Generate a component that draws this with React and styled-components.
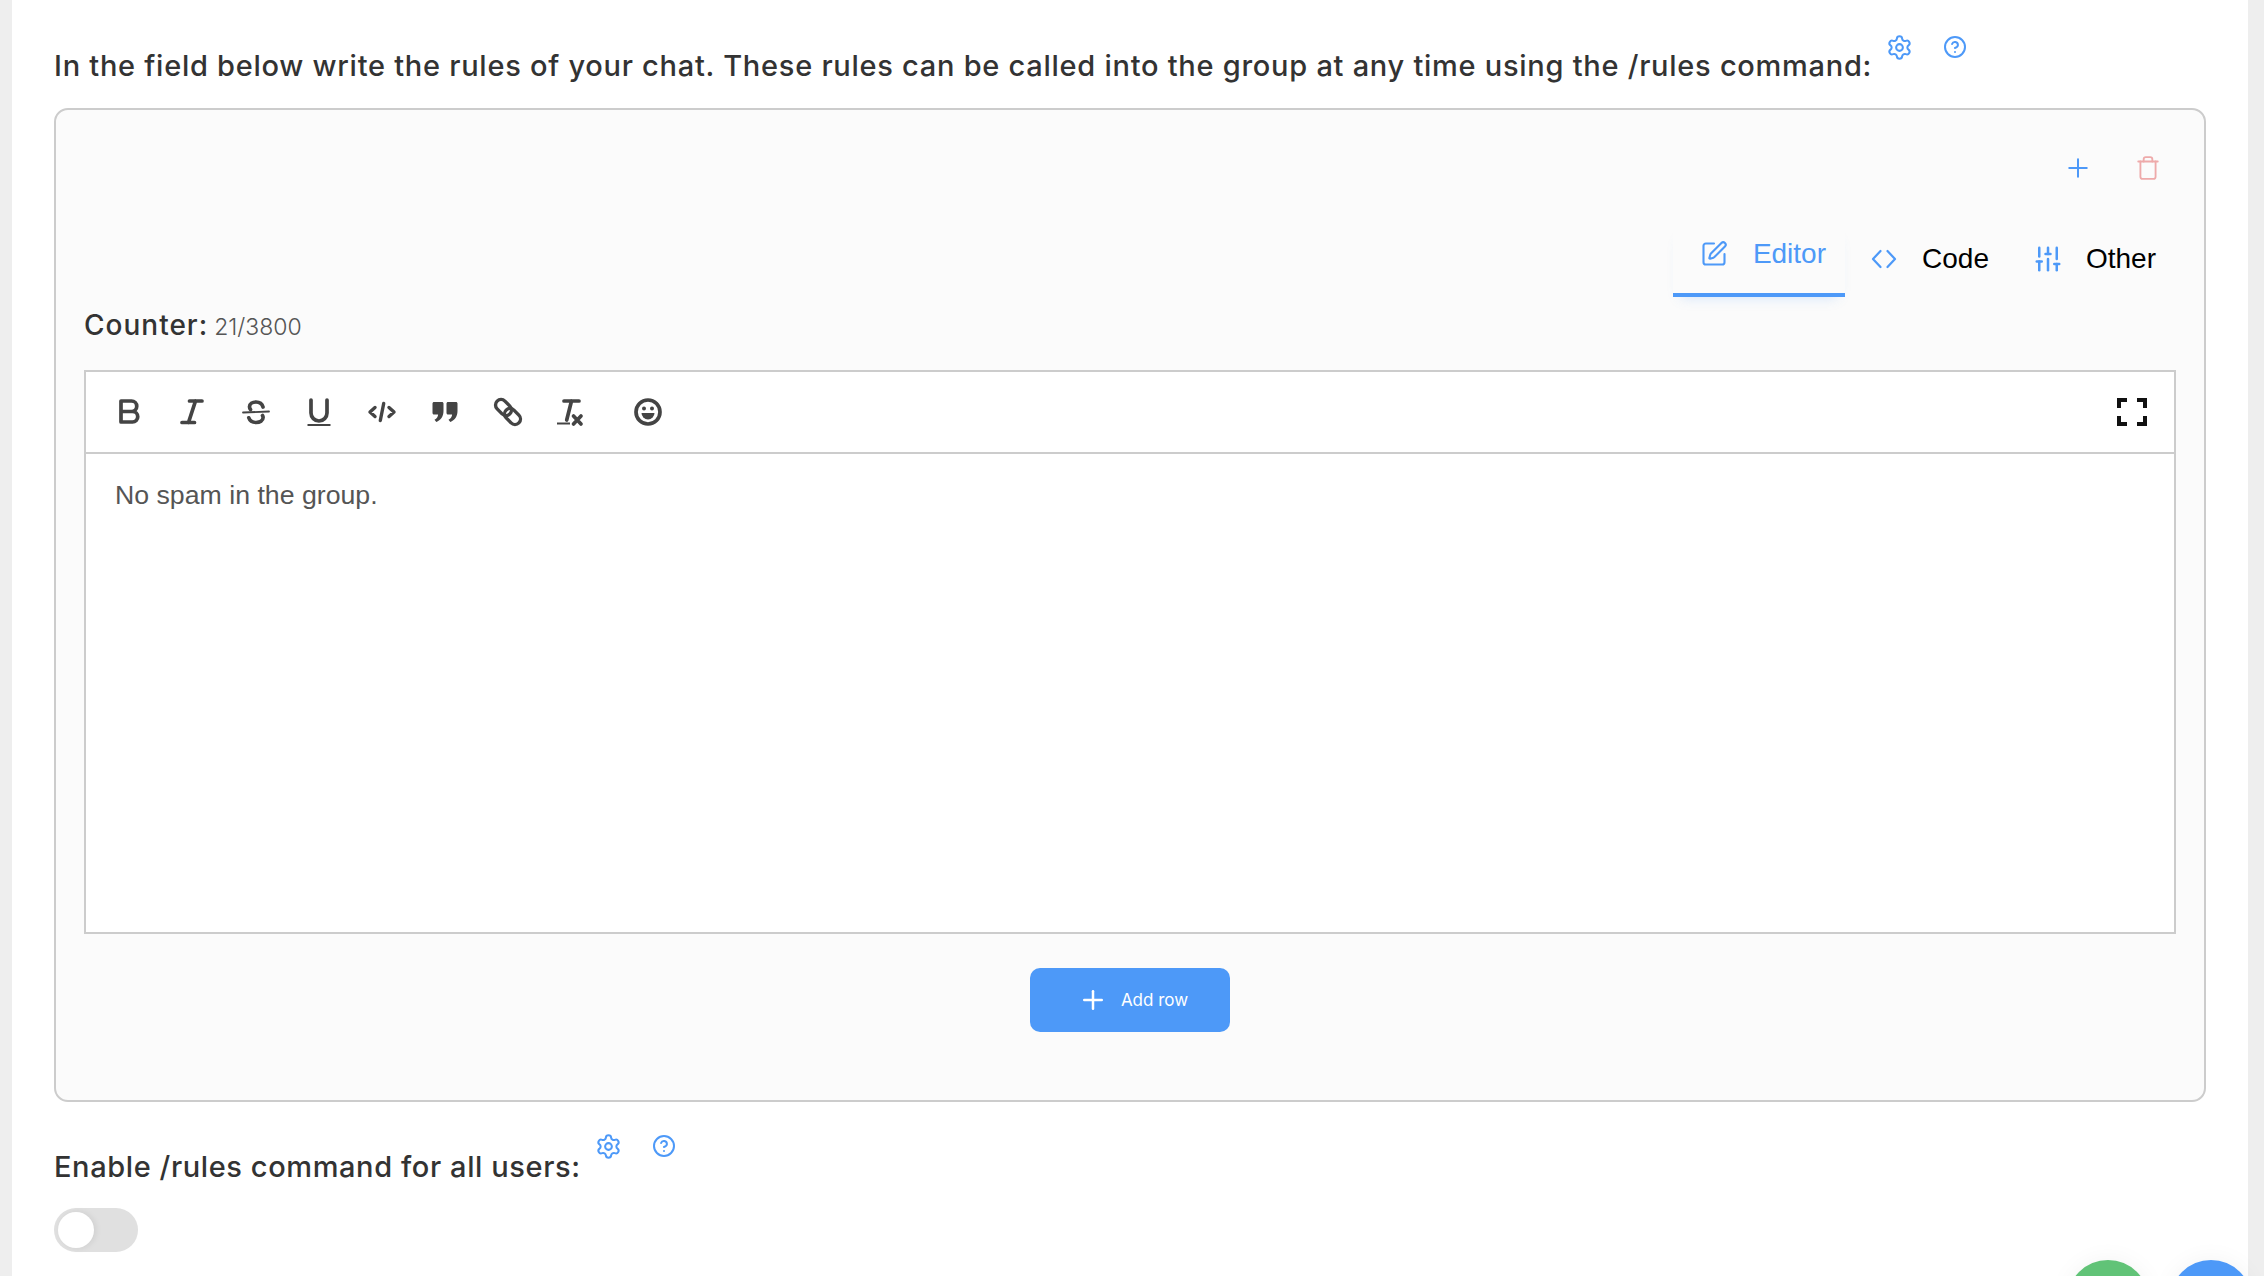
import React from "react";
import styled, { createGlobalStyle } from "styled-components";
import { Settings, CircleHelp, Plus, Trash, SquarePen, SlidersVertical } from "lucide-react";

const GlobalStyle = createGlobalStyle`
  html, body {
    margin: 0;
    padding: 0;
    background: #eeeeee;
  }
  * {
    box-sizing: border-box;
  }
`;

const BLUE = "#4d99f8";

const BoldIcon = () => (
  <ToolSvg viewBox="0 0 28 28">
    <path d="M5 3h10.500a5 5 0 0 1 0 10.500H5zM5 13.500h11.500a5.200 5.200 0 0 1 0 10.500H5z" />
  </ToolSvg>
);

const ItalicIcon = () => (
  <ToolSvg viewBox="0 0 28 28">
    <path d="M10.500 3h12.500M3 24.500h12.500M16.500 3l-7 21.500" />
  </ToolSvg>
);

const StrikeIcon = () => (
  <ToolSvg viewBox="0 0 28 28">
    <path d="M21 9c-1-3.600-3.800-5-7-5-3.600 0-6.500 1.800-6.500 4.800 0 1.200.4 2 1 2.700M20.500 17.500c.4.700.6 1.400.6 2.100 0 3-3.200 4.900-7 4.900-3.600 0-6.300-1.600-7.300-4.700" />
    <path d="M1 14.500l26-1" strokeWidth="1.800" />
  </ToolSvg>
);

const UnderlineIcon = () => (
  <ToolSvg viewBox="0 0 28 28">
    <path d="M6 2v13a8 8 0 0 0 16 0V2" />
    <path d="M2.500 27h23" strokeWidth="2" strokeLinecap="butt" />
  </ToolSvg>
);

const CodeIcon = () => (
  <ToolSvg viewBox="0 0 28 28">
    <path d="M7 9.500l-5 4.500 5 4.500M21 9.500l5 4.500-5 4.500M15.700 5.500l-3.400 17" strokeWidth="3.400" />
  </ToolSvg>
);

const QuoteIcon = () => (
  <ToolSvg viewBox="0 0 28 28">
    <path
      stroke="none"
      fill="#444"
      d="M3 4h8c.8 0 1.500.7 1.500 1.500V13c0 5.500-2.800 9.200-7.200 11L3.500 21.800c2.400-1.300 3.500-3 3.600-5.300H3c-.8 0-1.500-.7-1.500-1.500V5.500C1.500 4.700 2.200 4 3 4zM17 4h8c.8 0 1.500.7 1.500 1.500V13c0 5.500-2.800 9.200-7.200 11l-1.800-2.200c2.400-1.300 3.500-3 3.600-5.300H17c-.8 0-1.500-.7-1.500-1.500V5.500C15.500 4.700 16.200 4 17 4z"
    />
  </ToolSvg>
);

const LinkIcon = () => (
  <ToolSvg viewBox="0 0 28 28">
    <rect x="0.500" y="4" width="18" height="11" rx="5.500" transform="rotate(45 9.500 9.500)" strokeWidth="3.400" />
    <rect x="9.500" y="13" width="18" height="11" rx="5.500" transform="rotate(45 18.500 18.500)" strokeWidth="3.400" />
  </ToolSvg>
);

const ClearIcon = () => (
  <ToolSvg viewBox="0 0 28 28">
    <path d="M7 3h15M14.500 3l-4.800 19" />
    <path d="M0 25.500h13" strokeWidth="2" strokeLinecap="butt" />
    <path d="M16.500 18l7.500 8M24 18l-7.500 8" />
  </ToolSvg>
);

const EmojiIcon = () => (
  <ToolSvg viewBox="0 0 28 28">
    <circle cx="14" cy="14" r="12" />
    <circle cx="10" cy="10.500" r="2" fill="#444" stroke="none" />
    <circle cx="18" cy="10.500" r="2" fill="#444" stroke="none" />
    <path d="M7.500 15h13a6.500 6.500 0 0 1-13 0z" fill="#444" stroke="none" />
  </ToolSvg>
);

const FullscreenIcon = () => (
  <svg width="30" height="30" viewBox="0 0 30 30" fill="none" stroke="#111" strokeWidth="4">
    <path d="M2 11V3h8M20 3h8v8M28 19v8h-8M10 27H2v-8" />
  </svg>
);

const CodeTabIcon = () => (
  <svg width="26" height="22" viewBox="0 0 26 22" fill="none" stroke={BLUE} strokeWidth="2.200" strokeLinecap="round" strokeLinejoin="round">
    <path d="M9.500 3L2 11l7.500 8M16.500 3L24 11l-7.500 8" />
  </svg>
);

const HintIcons = () => (
  <Hints>
    <Settings size={27} strokeWidth={1.8} />
    <CircleHelp size={24} strokeWidth={2} />
  </Hints>
);

const App = () => {
  return (
    <Page>
      <GlobalStyle />
      <Panel>
        <TitleRow>
          <Title>In the field below write the rules of your chat. These rules can be called into the group at any time using the /rules command:</Title>
          <HintIcons />
        </TitleRow>

        <Card>
          <Actions>
            <Plus size={30} strokeWidth={1.6} color={BLUE} />
            <Trash size={26} strokeWidth={1.7} color="#eeaaaa" />
          </Actions>

          <Tabs>
            <Tab $active>
              <SquarePen size={28} strokeWidth={1.8} color={BLUE} />
              Editor
            </Tab>
            <Tab>
              <CodeTabIcon />
              Code
            </Tab>
            <Tab>
              <SlidersVertical size={30} strokeWidth={2} color={BLUE} />
              Other
            </Tab>
          </Tabs>

          <Counter>
            Counter:<CounterValue>21/3800</CounterValue>
          </Counter>

          <Editor>
            <Toolbar>
              <ToolButton><BoldIcon /></ToolButton>
              <ToolButton><ItalicIcon /></ToolButton>
              <ToolButton><StrikeIcon /></ToolButton>
              <ToolButton><UnderlineIcon /></ToolButton>
              <ToolButton><CodeIcon /></ToolButton>
              <ToolButton><QuoteIcon /></ToolButton>
              <ToolButton><LinkIcon /></ToolButton>
              <ToolButton><ClearIcon /></ToolButton>
              <ToolButton $spaced><EmojiIcon /></ToolButton>
              <FullscreenButton><FullscreenIcon /></FullscreenButton>
            </Toolbar>
            <EditorBody>No spam in the group.</EditorBody>
          </Editor>

          <AddRow>
            <Plus size={30} strokeWidth={2} />
            Add row
          </AddRow>
        </Card>

        <EnableRow>
          <Title>Enable /rules command for all users:</Title>
          <HintIcons />
        </EnableRow>

        <Toggle>
          <Knob />
        </Toggle>
      </Panel>

      <Fabs>
        <Fab $color="#61c377" />
        <Fab $color={BLUE} />
      </Fabs>
    </Page>
  );
};

const Page = styled.div`
  position: relative;
  height: 100vh;
  overflow: hidden;
  padding: 0 16px 0 12px;
  background: #eeeeee;
`;

const Panel = styled.div`
  height: 100%;
  background: #ffffff;
  padding: 35px 42px 0;
`;

const TitleRow = styled.div`
  display: flex;
  align-items: flex-start;
  margin-bottom: 22px;
`;

const Title = styled.div`
  margin-top: 11px;
  font-family: "Inter", sans-serif;
  font-weight: 500;
  font-size: 29px;
  line-height: 40px;
  letter-spacing: 0.73px;
  color: #333333;
  white-space: nowrap;
`;

const Hints = styled.div`
  display: flex;
  align-items: center;
  gap: 30px;
  height: 24px;
  margin-left: 14px;
  color: ${BLUE};
`;

const Card = styled.div`
  height: 994px;
  padding: 45px 28px 0;
  border: 2px solid #cccccc;
  border-radius: 14px;
  background: #fbfbfb;
`;

const Actions = styled.div`
  display: flex;
  justify-content: flex-end;
  align-items: center;
  gap: 42px;
  height: 26px;
  padding-right: 15px;
`;

const Tabs = styled.div`
  display: flex;
  justify-content: flex-end;
  margin-top: 44px;
`;

const Tab = styled.div`
  display: flex;
  align-items: center;
  gap: 25px;
  height: 72px;
  padding: ${(p) => (p.$active ? "0 19px 10px 27px" : "0 18px 0 26px")};
  border-bottom: 4px solid ${(p) => (p.$active ? BLUE : "transparent")};
  box-shadow: ${(p) => (p.$active ? "0 8px 12px -8px rgba(77, 153, 248, 0.25)" : "none")};
  font-family: "Liberation Sans", Arial, sans-serif;
  font-size: 28px;
  color: ${(p) => (p.$active ? BLUE : "#000000")};

  &:last-child {
    padding-right: 20px;
    gap: 23px;
  }
`;

const Counter = styled.div`
  display: flex;
  align-items: baseline;
  margin-top: 8px;
  height: 40px;
  font-family: "Inter", sans-serif;
  font-weight: 500;
  font-size: 28px;
  line-height: 40px;
  letter-spacing: 1px;
  color: #333333;
`;

const CounterValue = styled.span`
  margin-left: 6px;
  font-weight: 300;
  font-size: 23px;
  letter-spacing: 0;
  color: #555555;
`;

const Editor = styled.div`
  height: 564px;
  margin-top: 25px;
  border: 2px solid #cccccc;
  background: #ffffff;
`;

const Toolbar = styled.div`
  display: flex;
  align-items: center;
  height: 82px;
  padding: 0 12px;
  border-bottom: 2px solid #cccccc;
`;

const ToolButton = styled.div`
  display: flex;
  justify-content: center;
  width: 63px;
  margin-left: ${(p) => (p.$spaced ? "14px" : "0")};
`;

const ToolSvg = styled.svg`
  width: 28px;
  height: 28px;
  fill: none;
  stroke: #444444;
  stroke-width: 3.7;
  stroke-linecap: round;
  stroke-linejoin: round;
  overflow: visible;
`;

const FullscreenButton = styled.div`
  display: flex;
  margin-left: auto;
  padding-right: 15px;
`;

const EditorBody = styled.div`
  padding: 21px 29px;
  font-family: "Liberation Sans", Arial, sans-serif;
  font-size: 26.7px;
  line-height: 40px;
  color: #555555;
`;

const AddRow = styled.div`
  display: flex;
  align-items: center;
  justify-content: center;
  gap: 13px;
  width: 200px;
  height: 64px;
  margin: 34px auto 0;
  padding-left: 6px;
  border-radius: 10px;
  background: ${BLUE};
  font-family: "Inter", sans-serif;
  font-size: 17px;
  color: #ffffff;
`;

const EnableRow = styled.div`
  display: flex;
  align-items: flex-start;
  margin-top: 32px;
  ${Title} {
    margin-top: 13px;
    letter-spacing: 0.6px;
  }
`;

const Toggle = styled.div`
  width: 84px;
  height: 44px;
  margin-top: 21px;
  padding: 4px;
  border-radius: 22px;
  background: #e0e0e0;
`;

const Knob = styled.div`
  width: 36px;
  height: 36px;
  border-radius: 50%;
  background: #ffffff;
  box-shadow: 2px 0 6px rgba(0, 0, 0, 0.08);
`;

const Fabs = styled.div`
  position: absolute;
  right: 12px;
  bottom: -66px;
  display: flex;
  gap: 21px;
`;

const Fab = styled.div`
  width: 82px;
  height: 82px;
  border-radius: 50%;
  background: ${(p) => p.$color};
  box-shadow: 0 0 24px rgba(0, 0, 0, 0.05);
`;

export default App;
